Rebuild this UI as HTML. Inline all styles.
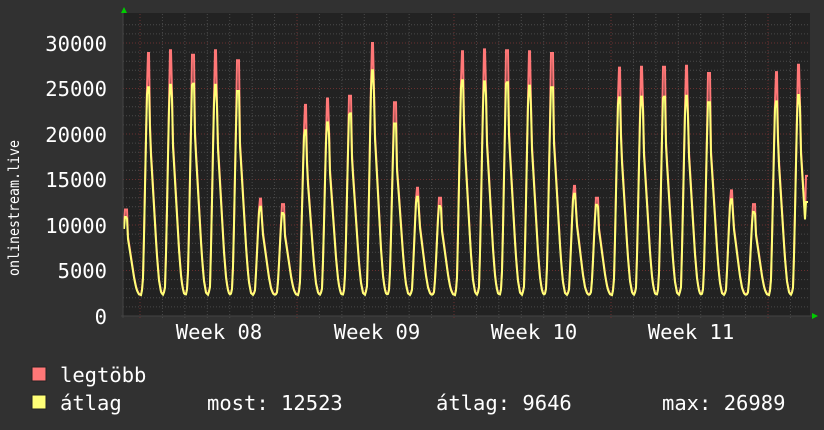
<!DOCTYPE html>
<html><head><meta charset="utf-8"><style>
body{margin:0;background:#313131;width:824px;height:430px;overflow:hidden;font-family:"DejaVu Sans Mono","Liberation Mono",monospace;color:#fff}
</style></head><body>
<svg id="g" width="824" height="430" xmlns="http://www.w3.org/2000/svg" style="position:absolute;left:0;top:0">
<rect x="0" y="0" width="824" height="430" fill="#313131"/>
<rect x="123" y="13" width="687" height="303" fill="#222"/>
<g id="grid"></g>
<g id="lines"></g>
<line x1="123" y1="13" x2="123" y2="318" stroke="#444" stroke-width="1"/>
<line x1="121" y1="316" x2="812" y2="316" stroke="#444" stroke-width="1"/>
<polygon points="121,13 127,13 124,7" fill="#0c0"/>
<polygon points="812,313 812,319 818,316" fill="#0c0"/>
<g font-family="DejaVu Sans Mono, Liberation Mono, monospace" font-size="20.5" fill="#fff" text-anchor="end">
<text x="107" y="51">30000</text><text x="107" y="96">25000</text><text x="107" y="142">20000</text>
<text x="107" y="187">15000</text><text x="107" y="233">10000</text><text x="107" y="278">5000</text><text x="107" y="324">0</text>
</g>
<g font-family="DejaVu Sans Mono, Liberation Mono, monospace" font-size="20.5" fill="#fff" text-anchor="middle">
<text x="219" y="339">Week 08</text><text x="377" y="339">Week 09</text><text x="534" y="339">Week 10</text><text x="691" y="339">Week 11</text>
</g>
<text transform="translate(19,208) rotate(-90)" text-anchor="middle" font-family="DejaVu Sans Mono, Liberation Mono, monospace" font-size="15" textLength="136" lengthAdjust="spacingAndGlyphs" fill="#fff">onlinestream.live</text>
<rect x="32" y="367" width="14" height="14" fill="#ff7777" stroke="#222" stroke-width="1"/>
<rect x="32" y="395" width="14" height="14" fill="#ffff77" stroke="#222" stroke-width="1"/>
<g font-family="DejaVu Sans Mono, Liberation Mono, monospace" font-size="20.5" fill="#fff">
<text x="60" y="382">legtöbb</text>
<text x="60" y="410">átlag</text>
<text x="207" y="410">most: 12523</text>
<text x="436" y="410">átlag: 9646</text>
<text x="662" y="410">max: 26989</text>
</g>
</svg>
<script>
var NS="http://www.w3.org/2000/svg";
function el(p,n,a){var e=document.createElementNS(NS,n);for(var k in a)e.setAttribute(k,a[k]);p.appendChild(e);return e;}
var grid=document.getElementById('grid'),lines=document.getElementById('lines');
function Y(v){return 316-v*273/30000;}
for(var v=1000;v<=32000;v+=1000){var y=Y(v);if(y<14)break;el(grid,'line',{x1:123,x2:810,y1:y,y2:y,stroke:v%5000?'#4a4a4a':'#6a3030','stroke-dasharray':'1,2','stroke-width':1});}
var P=157/7;
for(var k=-1;k<32;k++){var x=140+k*P;if(x<124||x>809)continue;var maj=Math.abs(((x-140)/157)-Math.round((x-140)/157))<0.01;
el(grid,'line',{x1:x,x2:x,y1:14,y2:319,stroke:maj?'#6a3030':'#4a4a4a','stroke-dasharray':'1,2','stroke-width':1});}
var peaks=[11700,28900,29200,28700,29200,28100,12900,12300,23200,23900,24200,30000,23500,14100,13000,29100,29300,29200,29100,28900,14300,13000,27300,27400,27400,27500,26700,13800,12300,26800,27600,20000];
var ratio=[.93,.87,.87,.89,.87,.88,.93,.92,.88,.89,.92,.9,.9,.93,.93,.89,.88,.88,.87,.87,.94,.94,.88,.88,.88,.88,.88,.93,.93,.88,.88,.88];
var shp=[[0,0],[0.08,0.04],[0.14,0.3],[0.2,0.62],[0.25,0.87],[0.28,1],[0.37,1],[0.41,0.72],[0.5,0.56],[0.6,0.38],[0.7,0.2],[0.8,0.07],[0.9,0.01],[1,0]];
function f(t){for(var i=1;i<shp.length;i++){if(t<=shp[i][0]){var a=shp[i-1],b=shp[i];return a[1]+(b[1]-a[1])*(t-a[0])/(b[0]-a[0]);}}return 0;}
function val(x,avg){var d=(x-141)/P;var k=Math.floor(d);var t=d-k;var i=Math.max(0,Math.min(peaks.length-1,k+1));var pk=peaks[i];var yp=pk*ratio[i];var mn=2300;
var ft=f(t);var yv=mn+(yp-mn)*Math.min(ft/0.98,1);if(!avg){var r=yv;if(t>0.27&&t<0.38){r=pk;}else r=yv*1.03;return r;}
return yv;}
function path(avg){var s='';for(var x=124;x<=808;x+=1){var v=val(x,avg);if(x>=806)v=avg?12523:15400;s+=(s?' L':'M')+x+','+Y(v).toFixed(1);}return s;}
el(lines,'path',{d:path(false),fill:'none',stroke:'#ff7777','stroke-width':2});
el(lines,'path',{d:path(true),fill:'none',stroke:'#ffff77','stroke-width':2});
</script>
</body></html>
